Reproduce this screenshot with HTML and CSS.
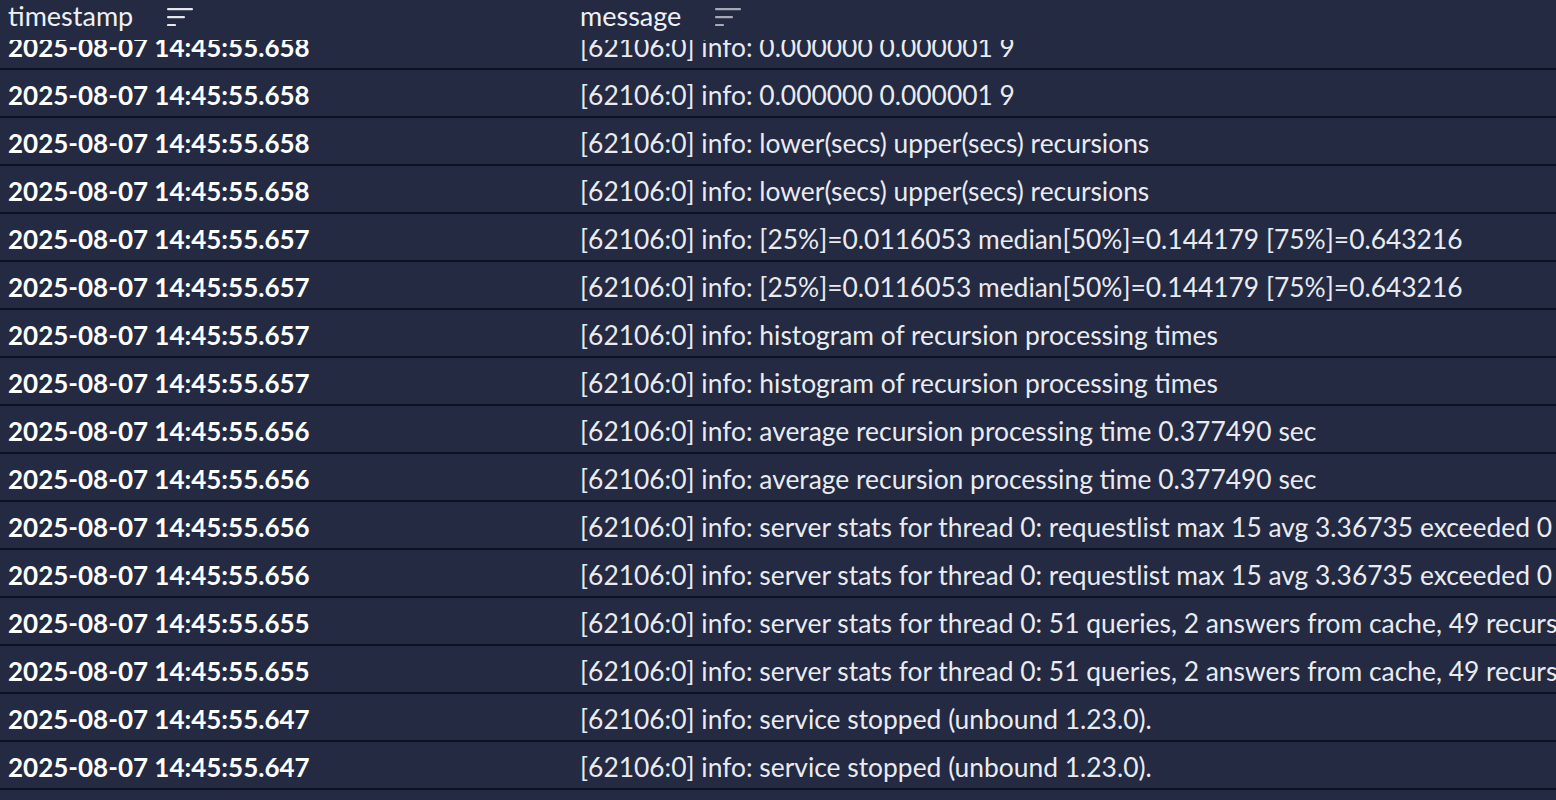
FILE: index.html
```html
<!DOCTYPE html>
<html>
<head>
<meta charset="utf-8">
<link rel="stylesheet" href="styles.css">
</head>
<body>
<div class="table">
  <div class="head">
    <div class="th th-ts">
      <span>timestamp</span>
      <svg class="sort active" width="26" height="18" viewBox="0 0 26 18"><rect x="0" y="0" width="26" height="2.2" rx="1"/><rect x="0" y="8" width="18" height="2.2" rx="1"/><rect x="0" y="16" width="9" height="2.2" rx="1"/></svg>
    </div>
    <div class="th th-msg">
      <span>message</span>
      <svg class="sort" width="26" height="18" viewBox="0 0 26 18"><rect x="0" y="0" width="26" height="2.2" rx="1"/><rect x="0" y="8" width="18" height="2.2" rx="1"/><rect x="0" y="16" width="9" height="2.2" rx="1"/></svg>
    </div>
  </div>
  <div class="body">
    <div class="rows">
      <div class="row"><div class="ts">2025-08-07 14:45:55.658</div><div class="msg">[62106:0] info: 0.000000 0.000001 9</div></div>
      <div class="row"><div class="ts">2025-08-07 14:45:55.658</div><div class="msg">[62106:0] info: 0.000000 0.000001 9</div></div>
      <div class="row"><div class="ts">2025-08-07 14:45:55.658</div><div class="msg">[62106:0] info: lower(secs) upper(secs) recursions</div></div>
      <div class="row"><div class="ts">2025-08-07 14:45:55.658</div><div class="msg">[62106:0] info: lower(secs) upper(secs) recursions</div></div>
      <div class="row"><div class="ts">2025-08-07 14:45:55.657</div><div class="msg">[62106:0] info: [25%]=0.0116053 median[50%]=0.144179 [75%]=0.643216</div></div>
      <div class="row"><div class="ts">2025-08-07 14:45:55.657</div><div class="msg">[62106:0] info: [25%]=0.0116053 median[50%]=0.144179 [75%]=0.643216</div></div>
      <div class="row"><div class="ts">2025-08-07 14:45:55.657</div><div class="msg">[62106:0] info: histogram of recursion processing times</div></div>
      <div class="row"><div class="ts">2025-08-07 14:45:55.657</div><div class="msg">[62106:0] info: histogram of recursion processing times</div></div>
      <div class="row"><div class="ts">2025-08-07 14:45:55.656</div><div class="msg">[62106:0] info: average recursion processing time 0.377490 sec</div></div>
      <div class="row"><div class="ts">2025-08-07 14:45:55.656</div><div class="msg">[62106:0] info: average recursion processing time 0.377490 sec</div></div>
      <div class="row"><div class="ts">2025-08-07 14:45:55.656</div><div class="msg">[62106:0] info: server stats for thread 0: requestlist max 15 avg 3.36735 exceeded 0 jostled 0</div></div>
      <div class="row"><div class="ts">2025-08-07 14:45:55.656</div><div class="msg">[62106:0] info: server stats for thread 0: requestlist max 15 avg 3.36735 exceeded 0 jostled 0</div></div>
      <div class="row"><div class="ts">2025-08-07 14:45:55.655</div><div class="msg">[62106:0] info: server stats for thread 0: 51 queries, 2 answers from cache, 49 recursions, 0 prefetch, 0 rejected by ip ratelimiting</div></div>
      <div class="row"><div class="ts">2025-08-07 14:45:55.655</div><div class="msg">[62106:0] info: server stats for thread 0: 51 queries, 2 answers from cache, 49 recursions, 0 prefetch, 0 rejected by ip ratelimiting</div></div>
      <div class="row"><div class="ts">2025-08-07 14:45:55.647</div><div class="msg">[62106:0] info: service stopped (unbound 1.23.0).</div></div>
      <div class="row"><div class="ts">2025-08-07 14:45:55.647</div><div class="msg">[62106:0] info: service stopped (unbound 1.23.0).</div></div>
      <div class="row"><div class="ts">2025-08-07 14:45:55.646</div><div class="msg">[62106:0] info: start of service (unbound 1.23.0).</div></div>
    </div>
  </div>
</div>
</body>
</html>
```
FILE: styles.css
```css
html, body {
  margin: 0;
  padding: 0;
  background: #232a42;
  height: 100%;
  overflow: hidden;
}
.table {
  font-family: "Lato", "Noto Sans", sans-serif;
  color: #f2f3f7;
  height: 800px;
  overflow: hidden;
  display: flex;
  flex-direction: column;
}
.head {
  position: relative;
  z-index: 2;
  height: 40px;
  flex: none;
  display: flex;
  background: #232a42;
}
.th {
  display: flex;
  align-items: center;
  gap: 34px;
  font-size: 27px;
  line-height: 1;
  padding-bottom: 10px;
  color: #eef0f5;
}
.th-ts {
  width: 572px;
  padding-left: 8px;
}
.sort {
  fill: #e6e7ee;
  flex: none;
  margin-top: 4px;
}
.sort:not(.active) {
  fill: #a7aab5;
}
.body {
  flex: 1;
  overflow: hidden;
}
.rows {
  margin-top: -18px;
}
.row {
  display: flex;
  height: 46px;
  align-items: center;
  border-bottom: 2px solid #0c1222;
  white-space: nowrap;
}
.ts {
  width: 572px;
  padding-left: 8px;
  padding-top: 3px;
  flex: none;
  font-weight: 700;
  font-size: 26px;
  color: #ffffff;
}
.msg {
  font-size: 26.4px;
  padding-top: 3px;
  color: #e9ebf1;
  overflow: hidden;
}
```
